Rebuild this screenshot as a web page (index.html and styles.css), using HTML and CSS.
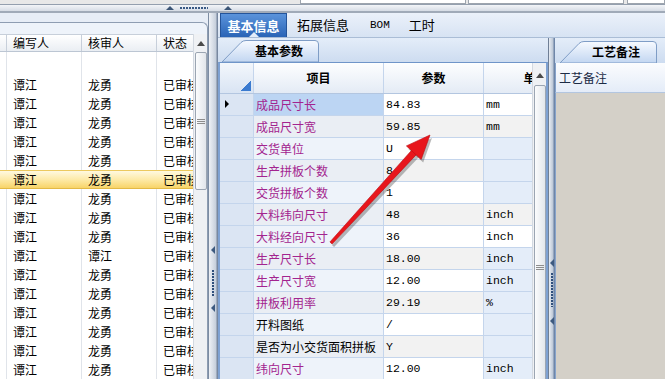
FILE: index.html
```html
<!DOCTYPE html>
<html lang="zh-CN">
<head>
    <meta charset="UTF-8">
    <title>工艺资料</title>
    <link rel="stylesheet" href="styles.css">
</head>
<body>
    <div class="topbar">
        <div class="fields">
            <span class="field f1"></span>
            <span class="field f2"></span>
            <span class="field f3"></span>
        </div>
        <div class="hsplit">
            <span class="tri t1"></span>
            <span class="hdots"></span>
            <span class="tri t2"></span>
        </div>
    </div>

    <div class="main">
        <!-- left list -->
        <div class="left">
            <div class="list-box">
                <div class="list-grid">
                    <div class="list-head">
                        <div class="c c0"></div>
                        <div class="c c1">编写人</div>
                        <div class="c c2">核审人</div>
                        <div class="c c3">状态</div>
                    </div>
                    <div class="list-blank">
                        <div class="c c0"></div><div class="c c1"></div><div class="c c2"></div><div class="c c3"></div>
                    </div>
                    <div class="list-row"><div class="c c0"></div><div class="c c1">谭江</div><div class="c c2">龙勇</div><div class="c c3">已审核</div></div>
                    <div class="list-row"><div class="c c0"></div><div class="c c1">谭江</div><div class="c c2">龙勇</div><div class="c c3">已审核</div></div>
                    <div class="list-row"><div class="c c0"></div><div class="c c1">谭江</div><div class="c c2">龙勇</div><div class="c c3">已审核</div></div>
                    <div class="list-row"><div class="c c0"></div><div class="c c1">谭江</div><div class="c c2">龙勇</div><div class="c c3">已审核</div></div>
                    <div class="list-row"><div class="c c0"></div><div class="c c1">谭江</div><div class="c c2">龙勇</div><div class="c c3">已审核</div></div>
                    <div class="list-row hot"><div class="c c0"></div><div class="c c1">谭江</div><div class="c c2">龙勇</div><div class="c c3">已审核</div></div>
                    <div class="list-row"><div class="c c0"></div><div class="c c1">谭江</div><div class="c c2">龙勇</div><div class="c c3">已审核</div></div>
                    <div class="list-row"><div class="c c0"></div><div class="c c1">谭江</div><div class="c c2">龙勇</div><div class="c c3">已审核</div></div>
                    <div class="list-row"><div class="c c0"></div><div class="c c1">谭江</div><div class="c c2">龙勇</div><div class="c c3">已审核</div></div>
                    <div class="list-row"><div class="c c0"></div><div class="c c1">谭江</div><div class="c c2">谭江</div><div class="c c3">已审核</div></div>
                    <div class="list-row"><div class="c c0"></div><div class="c c1">谭江</div><div class="c c2">龙勇</div><div class="c c3">已审核</div></div>
                    <div class="list-row"><div class="c c0"></div><div class="c c1">谭江</div><div class="c c2">龙勇</div><div class="c c3">已审核</div></div>
                    <div class="list-row"><div class="c c0"></div><div class="c c1">谭江</div><div class="c c2">龙勇</div><div class="c c3">已审核</div></div>
                    <div class="list-row"><div class="c c0"></div><div class="c c1">谭江</div><div class="c c2">龙勇</div><div class="c c3">已审核</div></div>
                    <div class="list-row"><div class="c c0"></div><div class="c c1">谭江</div><div class="c c2">龙勇</div><div class="c c3">已审核</div></div>
                    <div class="list-row"><div class="c c0"></div><div class="c c1">谭江</div><div class="c c2">龙勇</div><div class="c c3">已审核</div></div>
                </div>
                <div class="vscroll">
                    <div class="sb-up"><span class="up"></span></div>
                    <div class="sb-thumb s1"><span class="grip"></span></div>
                </div>
            </div>
        </div>

        <div class="vsplit s-left">
            <span class="sp-arrow"></span>
            <span class="sp-dots"></span>
            <span class="sp-arrow"></span>
        </div>

        <!-- work area -->
        <div class="work">
            <div class="tabs">
                <div class="tab active">基本信息</div>
                <div class="tab tb2">拓展信息</div>
                <div class="tab tb3 latin">BOM</div>
                <div class="tab tb4">工时</div>
            </div>
            <div class="work-body">
                <div class="center">
                    <div class="subbar">
                        <div class="subtab">
                            <svg class="subtab-bg" width="97" height="22" viewBox="0 0 97 22">
                                <defs>
                                    <linearGradient id="stg" x1="0" y1="0" x2="0" y2="1">
                                        <stop offset="0" stop-color="#f7faff"/>
                                        <stop offset="1" stop-color="#c2d6f1"/>
                                    </linearGradient>
                                </defs>
                                <path d="M0,22 L19,2.5 Q21,0.5 24,0.5 L93,0.5 Q96.5,0.5 96.5,4 L96.5,22 Z" fill="url(#stg)" stroke="#7f9dc6"/>
                            </svg>
                            <span class="subtab-label">基本参数</span>
                        </div>
                    </div>
                    <div class="grid-frame">
                        <div class="grid">
                            <div class="g-head">
                                <div class="gi"><span class="corner"></span></div>
                                <div class="gn">项目</div>
                                <div class="gv">参数</div>
                                <div class="gu">单位</div>
                            </div>
                            <div class="g-row"><div class="gi"><span class="cur"></span></div><div class="gn sel">成品尺寸长</div><div class="gv">84.83</div><div class="gu edit">mm</div></div>
                            <div class="g-row alt"><div class="gi"></div><div class="gn">成品尺寸宽</div><div class="gv">59.85</div><div class="gu edit">mm</div></div>
                            <div class="g-row"><div class="gi"></div><div class="gn">交货单位</div><div class="gv">U</div><div class="gu"></div></div>
                            <div class="g-row alt"><div class="gi"></div><div class="gn">生产拼板个数</div><div class="gv">8</div><div class="gu"></div></div>
                            <div class="g-row"><div class="gi"></div><div class="gn">交货拼板个数</div><div class="gv">1</div><div class="gu"></div></div>
                            <div class="g-row alt"><div class="gi"></div><div class="gn">大料纬向尺寸</div><div class="gv">48</div><div class="gu edit">inch</div></div>
                            <div class="g-row"><div class="gi"></div><div class="gn">大料经向尺寸</div><div class="gv">36</div><div class="gu edit">inch</div></div>
                            <div class="g-row alt"><div class="gi"></div><div class="gn">生产尺寸长</div><div class="gv">18.00</div><div class="gu">inch</div></div>
                            <div class="g-row"><div class="gi"></div><div class="gn">生产尺寸宽</div><div class="gv">12.00</div><div class="gu">inch</div></div>
                            <div class="g-row alt"><div class="gi"></div><div class="gn">拼板利用率</div><div class="gv">29.19</div><div class="gu">%</div></div>
                            <div class="g-row"><div class="gi"></div><div class="gn plain">开料图纸</div><div class="gv">/</div><div class="gu"></div></div>
                            <div class="g-row alt"><div class="gi"></div><div class="gn plain">是否为小交货面积拼板</div><div class="gv">Y</div><div class="gu"></div></div>
                            <div class="g-row"><div class="gi"></div><div class="gn">纬向尺寸</div><div class="gv">12.00</div><div class="gu">inch</div></div>
                        </div>
                        <div class="vscroll v2">
                            <div class="sb-up"><span class="up"></span></div>
                            <div class="sb-thumb s2"><span class="grip"></span></div>
                        </div>
                    </div>
                </div>

                <div class="vsplit s-mid">
                    <span class="sp-arrow"></span>
                    <span class="sp-dots"></span>
                    <span class="sp-arrow"></span>
                </div>

                <div class="right">
                    <div class="subbar r">
                        <div class="subtab">
                            <svg class="subtab-bg" width="97" height="22" viewBox="0 0 97 22">
                                <defs>
                                    <linearGradient id="stg2" x1="0" y1="0" x2="0" y2="1">
                                        <stop offset="0" stop-color="#f7faff"/>
                                        <stop offset="1" stop-color="#c2d6f1"/>
                                    </linearGradient>
                                </defs>
                                <path d="M0,22 L19,2.5 Q21,0.5 24,0.5 L93,0.5 Q96.5,0.5 96.5,4 L96.5,22 Z" fill="url(#stg2)" stroke="#7f9dc6"/>
                            </svg>
                            <span class="subtab-label">工艺备注</span>
                        </div>
                    </div>
                    <div class="note-head">工艺备注</div>
                    <div class="note-body"></div>
                </div>
            </div>
        </div>
    </div>

    <!-- red annotation arrow drawn over the grid -->
    <svg class="mark" width="665" height="379" viewBox="0 0 665 379">
        <g transform="translate(2,3)" fill="rgba(60,60,60,0.35)">
            <polygon points="332.1,244 329.9,242 414.1,147.5 418.9,151.9"/>
            <polygon points="430,135 406.4,145.9 421.2,159.5"/>
        </g>
        <g fill="#e8161c" stroke="#b80c10" stroke-width="0.6">
            <polygon points="332.1,244 329.9,242 414.1,147.5 418.9,151.9"/>
            <polygon points="430,135 406.4,145.9 421.2,159.5"/>
        </g>
    </svg>
</body>
</html>
```

FILE: styles.css
```css
* {
    box-sizing: border-box;
}
body {
    margin: 0;
    width: 665px;
    height: 379px;
    overflow: hidden;
    position: relative;
    background: #e3eaf5;
    font-family: "Noto Sans CJK SC", "Liberation Sans", sans-serif;
    font-size: 12px;
    color: #000;
}

/* top strip */
.topbar {
    height: 13px;
}
.fields {
    height: 4px;
    display: flex;
    background: #e8e8e8;
}
.field {
    background: #fff;
    border: 1px solid #9ea5ae;
    border-top: none;
}
.f1 {
    margin-left: 300px;
    width: 166px;
}
.f2 {
    margin-left: 2px;
    width: 156px;
}
.f3 {
    margin-left: 3px;
    flex: 1;
}
.hsplit {
    height: 9px;
    display: flex;
    align-items: center;
    background: linear-gradient(#f3f5f8, #d6dce5);
    border-top: 1px solid #949fae;
    border-bottom: 2px solid #a0aab8;
}
.tri {
    width: 0;
    height: 0;
    border-left: 4px solid transparent;
    border-right: 4px solid transparent;
    border-bottom: 4px solid #3b5576;
}
.t1 {
    margin-left: 166px;
}
.t2 {
    margin-left: 16px;
}
.hdots {
    margin-left: 6px;
    width: 28px;
    height: 2px;
    background: repeating-linear-gradient(to right, #3a5a85 0 2px, transparent 2px 3px);
}

.main {
    display: flex;
    height: 366px;
}

/* left list */
.left {
    width: 208px;
    padding-top: 9px;
    background: #e7edf6;
    display: flex;
    flex-direction: column;
}
.list-box {
    flex: 1;
    min-height: 0;
    display: flex;
    padding-top: 11px;
    background: #eef3fa;
    border-top: 1px solid #8e9db2;
    border-right: 1px solid #8e9db2;
    border-top-right-radius: 6px;
    overflow: hidden;
}
.list-grid {
    width: 193px;
    background: #fff;
    overflow: hidden;
}
.list-head,
.list-row,
.list-blank {
    display: flex;
}
.list-head {
    height: 18px;
    background: linear-gradient(#ffffff, #eaeef3);
    border-top: 1px solid #c7cfda;
    border-bottom: 1px solid #bcc6d3;
}
.list-blank {
    height: 23px;
}
.list-row {
    height: 19px;
}
.c {
    flex: none;
    padding-left: 6px;
    white-space: nowrap;
    overflow: hidden;
    border-right: 1px solid #e0e4ea;
    line-height: 19px;
}
.list-head .c {
    line-height: 16px;
    border-right-color: #c7cfda;
}
.c0 {
    width: 7px;
    padding: 0;
}
.c1,
.c2 {
    width: 75px;
}
.c3 {
    width: 36px;
    border-right: none;
}
.list-row.hot {
    background: linear-gradient(#fff9e0, #fdeaa8 50%, #f8d468);
    border-top: 1px solid #ecc95e;
    border-bottom: 1px solid #e3b945;
}
.list-row.hot .c {
    line-height: 17px;
    border-right-color: transparent;
}

/* scrollbars */
.vscroll {
    width: 14px;
    flex: none;
    background: #eff1f4;
    border-left: 1px solid #d3d9e1;
    display: flex;
    flex-direction: column;
    align-items: center;
    overflow: hidden;
}
.sb-up {
    height: 18px;
    flex: none;
    display: flex;
    justify-content: center;
    padding-top: 7px;
}
.up {
    width: 0;
    height: 0;
    border-left: 4px solid transparent;
    border-right: 4px solid transparent;
    border-bottom: 5px solid #4a4a4a;
}
.sb-thumb {
    flex: none;
    width: 12px;
    border: 1px solid #9ba5b2;
    border-radius: 2px;
    background: linear-gradient(to right, #fbfcfd, #e2e6eb);
    display: flex;
    align-items: center;
    justify-content: center;
}
.s1 {
    height: 138px;
}
.v2 .sb-up {
    height: 22px;
    padding-top: 10px;
}
.s2 {
    height: 364px;
}
.grip {
    width: 8px;
    height: 5px;
    background: repeating-linear-gradient(#8d8d8d 0 1px, transparent 1px 2px);
}

/* splitters */
.vsplit {
    flex: none;
    display: flex;
    flex-direction: column;
    align-items: center;
}
.s-left {
    width: 10px;
    padding-top: 233px;
    background: linear-gradient(to right, #7d8da3 0 1px, #eef1f6 1px, #c5cedb 8px, #7888a0 9px);
}
.s-mid {
    width: 7px;
    padding-top: 221px;
    background: linear-gradient(to right, #6f7f96 0 1px, #e7ecf3 1px, #bcc7d6 5px, #6f86a8 6px);
}
.sp-arrow {
    width: 0;
    height: 0;
    border-top: 4px solid transparent;
    border-bottom: 4px solid transparent;
    border-right: 4px solid #3d5a80;
}
.sp-dots {
    width: 2px;
    margin: 16px 0 7px;
    height: 27px;
    background: repeating-linear-gradient(#2f4f7c 0 2px, transparent 2px 3px);
}
.s-mid .sp-dots {
    margin: 6px 0 10px;
    height: 34px;
}

/* work area */
.work {
    flex: 1;
    display: flex;
    flex-direction: column;
}
.tabs {
    height: 25px;
    flex: none;
    display: flex;
    padding-left: 2px;
    background: linear-gradient(#ebf1fa, #d7e3f3);
    border-bottom: 1px solid #aabdd6;
}
.tab {
    font-size: 13px;
    line-height: 24px;
    white-space: nowrap;
}
.tab.active {
    position: relative;
    width: 67px;
    text-align: center;
    color: #fff;
    font-weight: bold;
    background: linear-gradient(#5a93db, #2a64b6);
    border: 1px solid #24549a;
    border-bottom: none;
    line-height: 23px;
}
.tab.active::after {
    content: "";
    position: absolute;
    left: 28px;
    bottom: 0;
    border-left: 5px solid transparent;
    border-right: 5px solid transparent;
    border-bottom: 5px solid #e4edf9;
}
.tb2 {
    margin-left: 10px;
}
.tb3 {
    margin-left: 21px;
}
.tb4 {
    margin-left: 19px;
}
.latin {
    font-family: "Liberation Mono", monospace;
    font-size: 11px;
}

.work-body {
    flex: 1;
    min-height: 0;
    display: flex;
}
.center {
    width: 330px;
    flex: none;
    display: flex;
    flex-direction: column;
}
.subbar {
    height: 24px;
    flex: none;
    display: flex;
    align-items: flex-end;
    padding-left: 4px;
    background: linear-gradient(#e4edf9, #cddcf0);
}
.subbar.r {
    padding-left: 5px;
    height: 25px;
}
.subtab {
    position: relative;
    width: 97px;
    height: 22px;
}
.subtab-bg {
    position: absolute;
    left: 0;
    top: 0;
}
.subtab-label {
    position: relative;
    display: block;
    padding-left: 33px;
    line-height: 22px;
    font-weight: bold;
}
.r .subtab-label {
    padding-left: 32px;
}

/* parameter grid */
.grid-frame {
    flex: 1;
    min-height: 0;
    display: flex;
    background: #fff;
    border-top: 1px solid #6f95c9;
    border-left: 2px solid #7ea1d2;
    border-right: 2px solid #7ea1d2;
}
.grid {
    width: 312px;
    flex: none;
    overflow: hidden;
}
.g-head,
.g-row {
    display: flex;
}
.g-head {
    height: 31px;
    background: linear-gradient(#fdfeff, #e4ebf5);
    border-bottom: 1px solid #b3c6e0;
    font-weight: bold;
    text-align: center;
    line-height: 30px;
}
.g-row {
    height: 22px;
    line-height: 21px;
}
.g-head > div,
.g-row > div {
    flex: none;
    border-right: 1px solid #c4d5ec;
    white-space: nowrap;
    overflow: hidden;
}
.g-row > div {
    border-bottom: 1px solid #c4d5ec;
}
.gi {
    width: 34px;
    position: relative;
    background: #dbe5f3;
}
.g-head .gi {
    background: linear-gradient(#f3f7fc, #d9e4f3);
}
.gn {
    width: 130px;
    padding-left: 2px;
    color: #a3248f;
    background: #eef3fa;
}
.gn.plain {
    color: #000;
}
.gn.sel {
    background: #bcd5f3;
}
.gv,
.gu {
    padding-left: 2px;
    font-family: "Liberation Mono", monospace;
    font-size: 11.5px;
}
.gv {
    width: 100px;
    background: #fff;
}
.gu {
    width: 104px;
    background: #e4edf9;
}
.gu.edit {
    background: #fff;
}
.alt .gv,
.alt .gu.edit {
    background: #f2f2f2;
}
.alt .gn {
    background: #eaeef4;
}
.g-head .gn,
.g-head .gv,
.g-head .gu {
    background: none;
    color: #000;
    font-family: "Noto Sans CJK SC", "Liberation Sans", sans-serif;
    font-size: 12px;
    padding-left: 0;
}
.corner {
    position: absolute;
    right: 2px;
    bottom: 2px;
    width: 11px;
    height: 10px;
    background: linear-gradient(to bottom right, transparent 50%, #3b7bd0 50%);
}
.cur {
    position: absolute;
    left: 5px;
    top: 6px;
    border-top: 4px solid transparent;
    border-bottom: 4px solid transparent;
    border-left: 4px solid #000;
}

/* right notes */
.right {
    flex: 1;
    display: flex;
    flex-direction: column;
}
.note-head {
    height: 30px;
    flex: none;
    padding-left: 3px;
    line-height: 29px;
    color: #1c2b45;
    background: linear-gradient(#fbfcfe, #e4ecf8);
    border-left: 1px solid #86a3cb;
    border-bottom: 1px solid #b3c6e0;
}
.note-body {
    flex: 1;
    background: #d4d0c8;
    border-left: 1px solid #86a3cb;
}

.mark {
    position: absolute;
    left: 0;
    top: 0;
    pointer-events: none;
}
```
